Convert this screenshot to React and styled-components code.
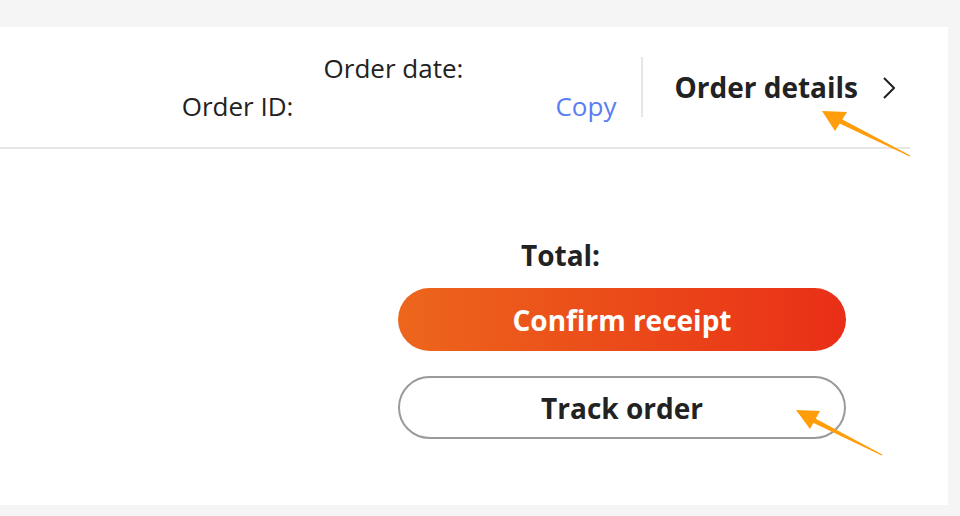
import React from 'react'
import styled, { createGlobalStyle } from 'styled-components'

const GlobalStyle = createGlobalStyle`
    html, body {
        margin: 0;
        padding: 0;
        background: #f5f5f5;
        font-family: 'Open Sans', 'Noto Sans', sans-serif;
        color: #222;
    }
`

const App = () => {
    return (
        <Page>
            <GlobalStyle />
            <Card>
                <Header>
                    <Info>
                        <InfoRow>
                            <Label>Order date:</Label>
                            <Value width={153} />
                        </InfoRow>
                        <InfoRow>
                            <Label>Order ID:</Label>
                            <Value width={262} />
                            <CopyLink>Copy</CopyLink>
                        </InfoRow>
                    </Info>
                    <Divider />
                    <DetailsLink>
                        Order details
                        <Chevron viewBox="0 0 12 22">
                            <path d="M1 1 L11 11 L1 21" />
                        </Chevron>
                    </DetailsLink>
                </Header>
                <Body>
                    <Actions>
                        <TotalRow>
                            <TotalLabel>Total:</TotalLabel>
                            <Value width={123} />
                        </TotalRow>
                        <Button primary>Confirm receipt</Button>
                        <Button>Track order</Button>
                    </Actions>
                </Body>
            </Card>
            <Overlay viewBox="0 0 960 516">
                <polygon points="822,111 847,112 835,131" />
                <polygon points="836.9,122.2 839.1,117.8 910.3,155.4 909.7,156.6" />
                <polygon points="796,410 820,411 810,429" />
                <polygon points="809.9,421.2 812.1,416.8 882.3,454.4 881.7,455.6" />
            </Overlay>
        </Page>
    )
}

const Page = styled.div`
    position: relative;
    width: 960px;
    height: 516px;
    padding-top: 27px;
    box-sizing: border-box;
    overflow: hidden;
`

const Card = styled.div`
    width: 948px;
    height: 478px;
    background: #fff;
`

const Header = styled.div`
    display: flex;
    align-items: center;
    justify-content: flex-end;
    margin-right: 38px;
    padding: 22px 15px 22px 0;
    border-bottom: 2px solid #e6e6e6;
`

const Info = styled.div`
    display: flex;
    flex-direction: column;
`

const InfoRow = styled.div`
    display: flex;
    justify-content: flex-end;
    font-size: 26px;
    line-height: 38px;
`

const Label = styled.span`
    white-space: nowrap;
`

const Value = styled.span`
    display: inline-block;
    width: ${p => p.width}px;
`

const CopyLink = styled.span`
    color: #5a7df5;
    cursor: pointer;
`

const Divider = styled.div`
    width: 2px;
    height: 60px;
    margin: 0 31px 0 25px;
    background: #e6e6e6;
`

const DetailsLink = styled.div`
    display: flex;
    align-items: center;
    gap: 25px;
    font-size: 28px;
    font-weight: 700;
    line-height: 38px;
    cursor: pointer;
`

const Chevron = styled.svg`
    width: 12px;
    height: 22px;
    margin-top: 2px;
    fill: none;
    stroke: #222;
    stroke-width: 2;
`

const Body = styled.div`
    display: flex;
    justify-content: flex-end;
    padding: 88px 102px 0 0;
`

const Actions = styled.div`
    display: flex;
    flex-direction: column;
    width: 448px;
`

const TotalRow = styled.div`
    display: flex;
    justify-content: center;
    margin-bottom: 14px;
`

const TotalLabel = styled.span`
    font-size: 28px;
    font-weight: 700;
    line-height: 37px;
`

const Button = styled.button`
    height: 63px;
    border-radius: 32px;
    font-family: inherit;
    font-size: 28px;
    font-weight: 700;
    cursor: pointer;
    color: ${p => (p.primary ? '#fff' : '#222')};
    background: ${p =>
        p.primary ? 'linear-gradient(90deg, #ed661c, #e92f17)' : '#fff'};
    border: ${p => (p.primary ? 'none' : '2px solid #9a9a9a')};
    & + & {
        margin-top: 25px;
    }
`

const Overlay = styled.svg`
    position: absolute;
    top: 0;
    left: 0;
    width: 960px;
    height: 516px;
    pointer-events: none;
    fill: #ff9d0a;
`

export default App
